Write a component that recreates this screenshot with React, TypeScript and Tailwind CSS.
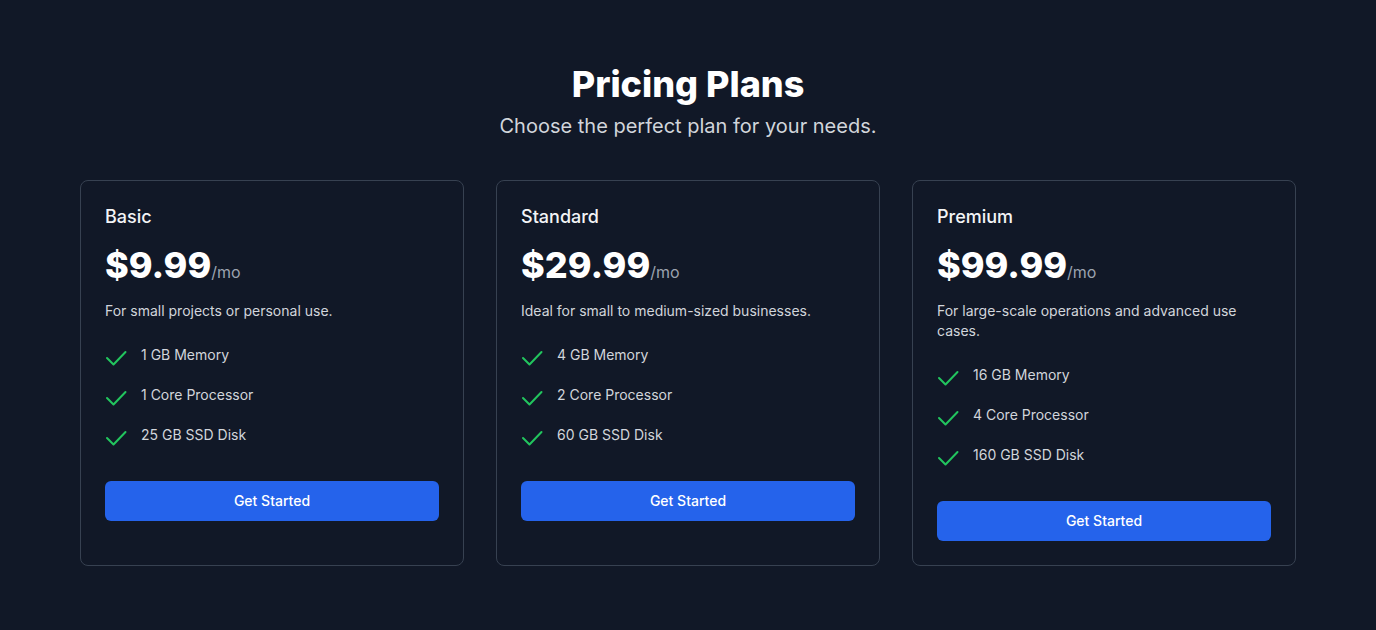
import React from 'react';

interface Plan {
  name: string;
  price: string;
  description: string;
  features: string[];
}

const plans: Plan[] = [
  {
    name: 'Basic',
    price: '$9.99',
    description: 'For small projects or personal use.',
    features: ['1 GB Memory', '1 Core Processor', '25 GB SSD Disk'],
  },
  {
    name: 'Standard',
    price: '$29.99',
    description: 'Ideal for small to medium-sized businesses.',
    features: ['4 GB Memory', '2 Core Processor', '60 GB SSD Disk'],
  },
  {
    name: 'Premium',
    price: '$99.99',
    description: 'For large-scale operations and advanced use cases.',
    features: ['16 GB Memory', '4 Core Processor', '160 GB SSD Disk'],
  },
];

const CheckIcon: React.FC = () => (
  <svg
    className="h-6 w-6 shrink-0 text-[#22c55e]"
    fill="none"
    viewBox="0 0 24 24"
    stroke="currentColor"
    strokeWidth={2}
  >
    <path strokeLinecap="round" strokeLinejoin="round" d="M2 13l6.5 6.5L20.5 7" />
  </svg>
);

const PlanCard: React.FC<{ plan: Plan }> = ({ plan }) => {
  return (
    <div className="flex flex-col rounded-lg border border-[#374151] bg-[#111827] p-6">
      <h3 className="text-lg font-medium leading-6 text-[#f3f4f6]">{plan.name}</h3>
      <div className="mt-4 flex items-baseline">
        <span className="text-4xl font-extrabold text-white">{plan.price}</span>
        <span className="text-base text-[#9ca3af]">/mo</span>
      </div>
      <p className="mt-4 text-sm text-[#d1d5db]">{plan.description}</p>
      <ul className="mt-6 space-y-4">
        {plan.features.map((f) => (
          <li key={f} className="flex items-start gap-3">
            <CheckIcon />
            <span className="text-sm text-[#d1d5db]">{f}</span>
          </li>
        ))}
      </ul>
      <button className="mt-8 h-10 w-full rounded-md bg-[#2563eb] text-sm font-medium text-white">
        Get Started
      </button>
    </div>
  );
};

export default function App() {
  return (
    <div
      className="min-h-screen bg-[#111827] py-16"
      style={{ fontFamily: 'Inter, "Noto Sans", sans-serif' }}
    >
      <div className="mx-auto max-w-7xl px-8">
        <div className="text-center">
          <h2 className="text-4xl font-extrabold text-white">Pricing Plans</h2>
          <p className="mt-2 text-xl text-[#d1d5db]">Choose the perfect plan for your needs.</p>
        </div>
        <div className="mt-10 grid grid-cols-3 gap-8">
          {plans.map((p) => (
            <PlanCard key={p.name} plan={p} />
          ))}
        </div>
      </div>
    </div>
  );
}
